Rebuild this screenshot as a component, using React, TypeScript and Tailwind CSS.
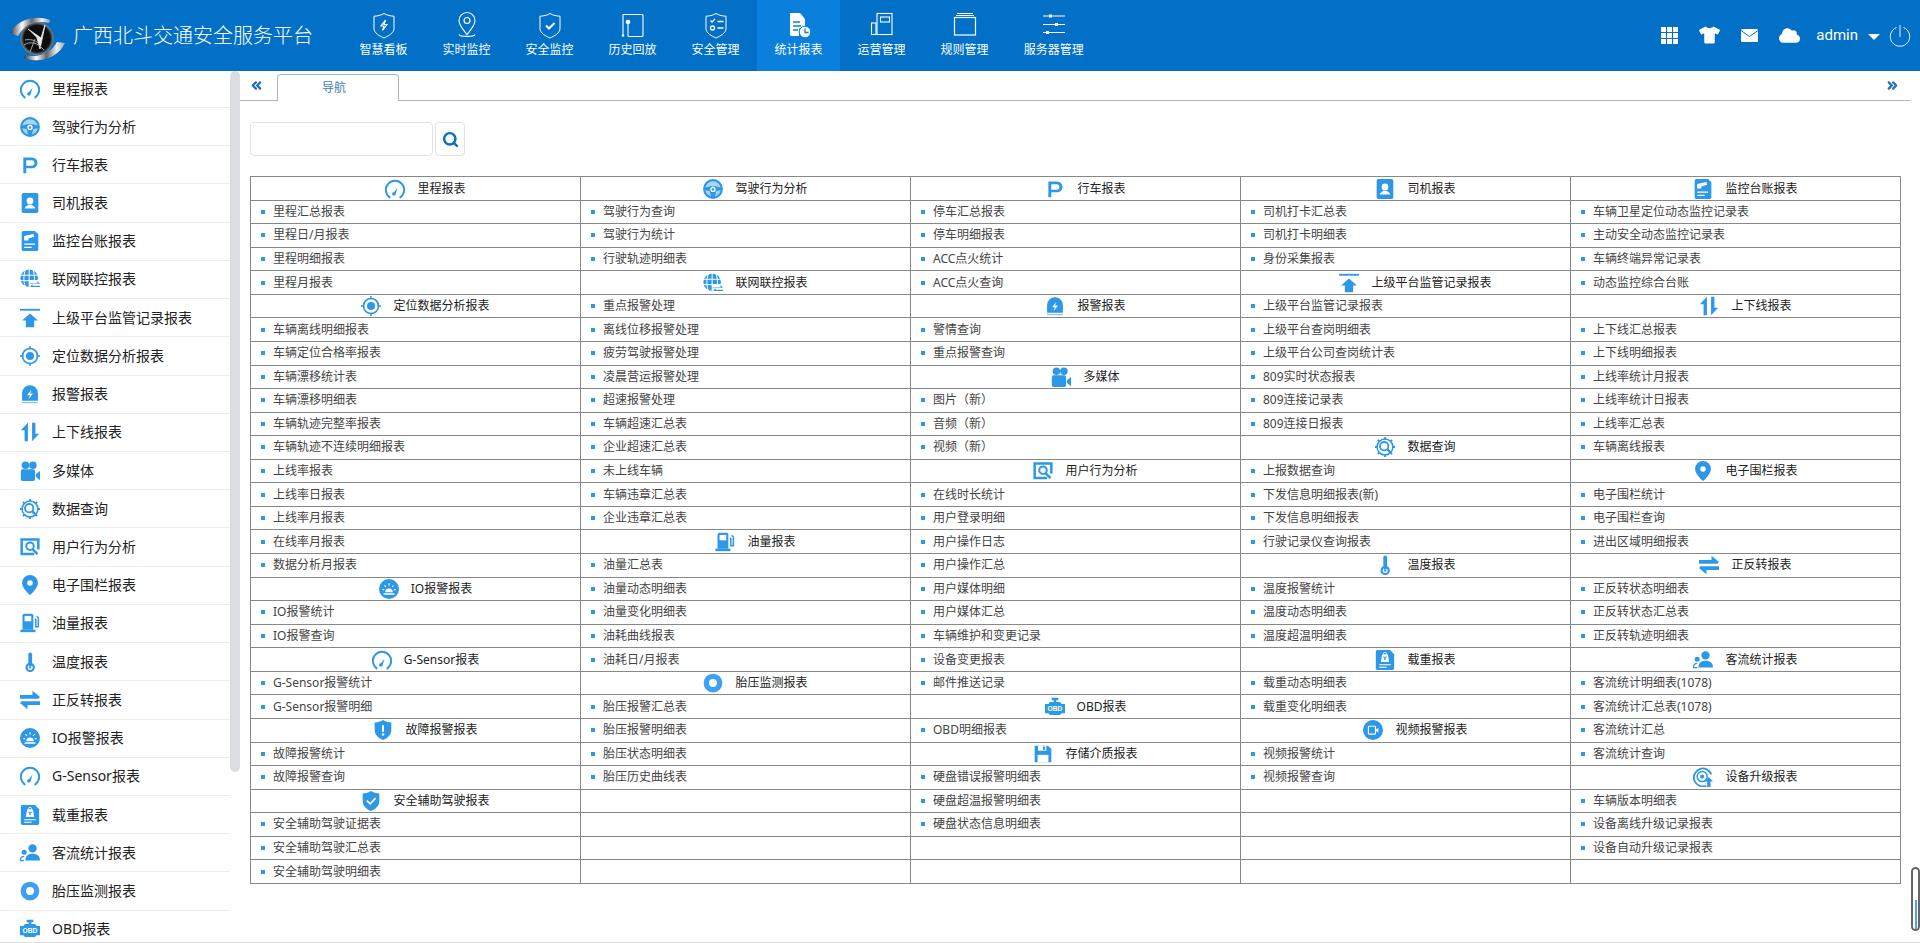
import React from 'react';
import { FaTshirt, FaCloud } from 'react-icons/fa';
import { ChevronsLeft, ChevronsRight, Search } from 'lucide-react';

type IconName =
  | 'gauge' | 'wheel' | 'park' | 'driver' | 'ledger' | 'globe' | 'upload' | 'target' | 'alarm'
  | 'updown' | 'camera' | 'dataq' | 'behavior' | 'pin' | 'fuel' | 'thermo' | 'swap' | 'ioalarm'
  | 'weight' | 'people' | 'tire' | 'obd' | 'fault' | 'safe' | 'save' | 'video' | 'upgrade';

// 报表分类图标，全部按 24x24 绘制
const ReportIcon: React.FC<{ name: IconName; className?: string }> = ({ name, className = 'w-5 h-5' }) => {
  const white = '#fff';
  const shapes: Record<IconName, React.ReactNode> = {
    gauge: (
      <>
        <path d="M5.5 22A11 11 0 1 1 18.5 22" fill="none" stroke="currentColor" strokeWidth="2.4" strokeLinecap="round" />
        <path d="M9.5 17.5L15 10.5 12.5 19z" fill="currentColor" />
        <circle cx="10.5" cy="18" r="2" fill="currentColor" />
      </>
    ),
    wheel: (
      <>
        <circle cx="12" cy="12" r="10.6" fill="#a9d5f7" stroke="currentColor" strokeWidth="2.6" />
        <path d="M2 10.500C7 8 17 8 22 10.500v3l-6 1-2 8h-4l-2-8-6-1z" fill="currentColor" />
        <circle cx="12" cy="12.500" r="3.200" fill={white} />
        <circle cx="12" cy="12.500" r="1.500" fill="currentColor" />
      </>
    ),
    park: <path fillRule="evenodd" fill="currentColor" d="M4 3h10.5a6.5 6.5 0 0 1 0 13H7.5v6H4zM7.5 6.200v6.600h6.500a3.300 3.300 0 0 0 0-6.600z" />,
    driver: (
      <>
        <rect x="2" y="0" width="20" height="24" rx="2" fill="currentColor" />
        <circle cx="12" cy="9.500" r="4" fill={white} />
        <path d="M5.500 18.500c1-3 4-3.500 4.500-4.500h4c.5 1 3.500 1.500 4.500 4.500z" fill={white} />
      </>
    ),
    ledger: (
      <>
        <path d="M2 2a2 2 0 0 1 2-2h14l4 4v18a2 2 0 0 1-2 2H4a2 2 0 0 1-2-2z" fill="currentColor" />
        <path d="M5 6l11-2.500 1 3.500-7 2v2.500H5zM5 15h13v1.500H5zM5 19h9v1.500H5z" fill={white} />
      </>
    ),
    globe: (
      <>
        <circle cx="11" cy="11" r="10.500" fill="currentColor" />
        <path d="M0 7.500h22M0 14h22" stroke={white} strokeWidth="1.200" />
        <path d="M11 0v22M6.500 1c-2.500 6-2.500 14 0 20M15.500 1c2.500 6 2.500 14 0 20" fill="none" stroke={white} strokeWidth="1.200" />
        <rect x="11" y="13.500" width="13" height="10.500" fill={white} />
        <path d="M12 17h9v-2.500l3 3.300H12zM24 20h-9v-2l-3 3.700h12z" fill="currentColor" />
      </>
    ),
    upload: (
      <>
        <rect x="0" y="1" width="24" height="2.200" fill="currentColor" />
        <path d="M12 6.500l9.500 8.500H17v8H7v-8H2.500z" fill="currentColor" />
      </>
    ),
    target: (
      <>
        <circle cx="12" cy="12" r="9" fill="none" stroke="currentColor" strokeWidth="2" />
        <circle cx="12" cy="12" r="4.800" fill="currentColor" />
        <path d="M12 0v4M12 20v4M0 12h4M20 12h4" stroke="currentColor" strokeWidth="1.800" />
      </>
    ),
    alarm: (
      <>
        <path d="M2.500 20v-9a9.500 9.500 0 0 1 19 0v9z" fill="currentColor" />
        <path d="M14 6.500l-5.500 7h3.500l-2 5 5.500-7h-3.500z" fill={white} />
        <rect x="2.500" y="21.500" width="19" height="1.600" fill="currentColor" opacity=".55" />
      </>
    ),
    updown: <path d="M1 10L9.500 1v22h-4V10zM14.500 1h4v13H23l-8.500 9z" fill="currentColor" />,
    camera: (
      <>
        <circle cx="6.500" cy="5" r="4.500" fill="currentColor" />
        <circle cx="15.500" cy="5" r="4.500" fill="currentColor" />
        <path d="M1 12a2 2 0 0 1 2-2h13a2 2 0 0 1 2 2v10a2 2 0 0 1-2 2H3a2 2 0 0 1-2-2z" fill="currentColor" />
        <path d="M19 16l5-4v11l-5-4z" fill="currentColor" />
      </>
    ),
    dataq: (
      <>
        <circle cx="12" cy="12" r="9.500" fill="none" stroke="currentColor" strokeWidth="1.800" />
        <path d="M12 0v3M12 21v3M0 12h3M21 12h3M3.500 3.500l2 2M18.500 18.500l2 2M20.500 3.500l-2 2M3.500 20.500l2-2" stroke="currentColor" strokeWidth="2.200" />
        <circle cx="11" cy="11" r="5" fill="none" stroke="currentColor" strokeWidth="2.200" />
        <path d="M14.500 14.500l4.500 4.500" stroke="currentColor" strokeWidth="3" />
      </>
    ),
    behavior: (
      <>
        <path d="M17 20.500H2V3h20v12" fill="none" stroke="currentColor" strokeWidth="3" />
        <circle cx="12" cy="11" r="4.500" fill="none" stroke="currentColor" strokeWidth="2.400" />
        <path d="M15 14.500l6 6" stroke="currentColor" strokeWidth="3" />
      </>
    ),
    pin: (
      <path fillRule="evenodd" fill="currentColor" d="M12 0a9.500 9.500 0 0 1 9.500 9.500C21.500 16 12 24 12 24S2.500 16 2.500 9.500A9.500 9.500 0 0 1 12 0zm0 6.200a3.300 3.300 0 1 0 0 6.600 3.300 3.300 0 0 0 0-6.600z" />
    ),
    fuel: (
      <>
        <path d="M3 3a2 2 0 0 1 2-2h9a2 2 0 0 1 2 2v17H3z" fill="currentColor" />
        <rect x="5.500" y="3.500" width="8" height="6.500" fill={white} />
        <rect x="0.500" y="20" width="18" height="3" fill="currentColor" />
        <path d="M18 7l1 1v8.500h3V6l-2-2" fill="none" stroke="currentColor" strokeWidth="1.800" />
      </>
    ),
    thermo: (
      <>
        <rect x="10" y="0.500" width="4.500" height="17" rx="2.200" fill="currentColor" />
        <circle cx="12.200" cy="18.500" r="4.300" fill="none" stroke="currentColor" strokeWidth="2.600" />
        <circle cx="12.200" cy="18.500" r="1.400" fill="currentColor" />
      </>
    ),
    swap: <path d="M0 6h15V1l9 7.500-2 2H0zM24 13.500H2L0 15.500 9 23v-5h15z" fill="currentColor" />,
    ioalarm: (
      <>
        <circle cx="12" cy="12" r="12" fill="currentColor" />
        <path d="M7.500 16a4.500 4.500 0 0 1 9 0zM5.500 17h13v1.800h-13z" fill={white} />
        <path d="M12 5v3M6.500 7.500l1.800 2M17.500 7.500l-1.800 2M4 12.500l2.300.8M20 12.500l-2.300.8" stroke={white} strokeWidth="1.300" />
      </>
    ),
    weight: (
      <>
        <path d="M1 2a2 2 0 0 1 2-2h15l5 5v17a2 2 0 0 1-2 2H3a2 2 0 0 1-2-2z" fill="currentColor" />
        <path d="M8.500 5.500h7l1.500 9H7z" fill={white} />
        <circle cx="12" cy="4.500" r="1.800" fill="none" stroke={white} />
        <path d="M11.200 8h1.600v4h-1.600zM9.800 8h4.400v1H9.800z" fill="currentColor" />
        <path d="M5 17h14v1.300H5zM5 20h9v1.300H5z" fill={white} />
      </>
    ),
    people: (
      <>
        <circle cx="15" cy="6.500" r="5" fill="currentColor" />
        <path d="M6.500 21c0-6 4-8 8.500-8s9 2 9 8z" fill="currentColor" />
        <circle cx="5" cy="11" r="3" fill="currentColor" />
        <path d="M5 16c-3 0-4.500 2-4.500 5H5" fill="none" stroke="currentColor" strokeWidth="1.500" />
      </>
    ),
    tire: <circle cx="12" cy="12" r="8" fill="none" stroke="#3f9ff5" strokeWidth="6.500" />,
    obd: (
      <>
        <path d="M8 1h8v3h-2.500v2H18l2 2.500h4v11h-4l-2 2H6l-2-2H0v-11h4L6 6h4.500V4H8z" fill="currentColor" />
        <text x="12" y="17" textAnchor="middle" fontSize="8" fontWeight="700" fill={white} fontFamily="Liberation Sans, sans-serif">OBD</text>
      </>
    ),
    fault: (
      <>
        <path d="M12 0c3 2 6 3 10 3v9c0 6-5 10-10 12C7 22 2 18 2 12V3c4 0 7-1 10-3z" fill="currentColor" />
        <rect x="10.800" y="6" width="2.400" height="8.500" rx="1" fill={white} />
        <circle cx="12" cy="17.500" r="1.500" fill={white} />
      </>
    ),
    safe: (
      <>
        <path d="M12 0c3 2 6 3 10 3v9c0 6-5 10-10 12C7 22 2 18 2 12V3c4 0 7-1 10-3z" fill="currentColor" />
        <path d="M7 11.500l4 4 6.500-7" fill="none" stroke={white} strokeWidth="2" />
      </>
    ),
    save: (
      <>
        <path d="M2 2h16l4 4v16H2z" fill="currentColor" />
        <rect x="6" y="2" width="10" height="6" fill={white} />
        <rect x="12" y="3" width="2.500" height="4" fill="currentColor" />
        <rect x="5.500" y="13" width="13" height="9" fill={white} />
      </>
    ),
    video: (
      <>
        <circle cx="12" cy="12" r="12" fill="currentColor" />
        <rect x="6.500" y="7.500" width="8.500" height="9.500" rx="1" fill="none" stroke={white} strokeWidth="1.400" />
        <path d="M15.500 11.500l3-2v5.500l-3-2z" fill={white} />
      </>
    ),
    upgrade: (
      <>
        <path d="M16 22.500A10.800 10.800 0 1 1 22 9" fill="none" stroke="currentColor" strokeWidth="2.200" />
        <circle cx="11" cy="11.500" r="6" fill="none" stroke="currentColor" strokeWidth="1.800" />
        <circle cx="11" cy="11.500" r="2.500" fill="currentColor" />
        <path d="M19 12l5 5.500h-3V24h-4v-6.500h-3z" fill="currentColor" />
      </>
    ),
  };
  return (
    <svg viewBox="0 0 24 24" className={`${className} shrink-0 text-[#2d97e8]`}>
      {shapes[name]}
    </svg>
  );
};

const shield = 'M14 2.500c3.500 2 6.500 2.500 10 2.700v12.300c0 4.500-5.500 7.500-10 9.500-4.500-2-10-5-10-9.500V5.200c3.500-.2 6.500-.7 10-2.700z';

// 顶部导航的线框图标
const navIcons: React.ReactNode[] = [
  <>
    <path d={shield} fill="none" stroke="#fff" strokeWidth="1" />
    <path d="M15.500 9l-4.500 6h3l-1.500 4.500 4.500-6h-3z" fill="none" stroke="#fff" strokeWidth="1.200" />
  </>,
  <>
    <path d="M14 1.500a8 8 0 0 1 8 8c0 5-5 10-8 14-3-4-8-9-8-14a8 8 0 0 1 8-8z" fill="none" stroke="#fff" strokeWidth="1.100" />
    <circle cx="14" cy="9.500" r="3" fill="none" stroke="#fff" strokeWidth="1.200" />
    <path d="M6 23.500c1 2.500 15 2.500 16 0" fill="none" stroke="#fff" strokeWidth="1.100" />
  </>,
  <>
    <path d={shield} fill="none" stroke="#fff" strokeWidth="1" />
    <path d="M10 14.500l3 3 5.500-5.500" fill="none" stroke="#fff" strokeWidth="2" />
  </>,
  <>
    <path d="M4 24V6a2 2 0 0 1 0-1V3.500h19a1 1 0 0 1 1 1v20a1 1 0 0 1-1 1H10a1 1 0 0 1-1-1V11" fill="none" stroke="#fff" strokeWidth="1.100" />
    <circle cx="9" cy="11" r="2.300" fill="#fff" />
    <circle cx="4" cy="24.500" r="1.300" fill="#fff" />
  </>,
  <>
    <path d={shield} fill="none" stroke="#fff" strokeWidth="1" />
    <path d="M8.500 9.500l1.500 1.500 3-3M15.500 10.500h6M15.500 17h6" fill="none" stroke="#fff" strokeWidth="1.400" />
    <circle cx="10.500" cy="17" r="2" fill="none" stroke="#fff" strokeWidth="1.400" />
  </>,
  <>
    <path d="M5 2h10l5 6v9.500H5z" fill="#fff" />
    <path d="M5 17h9v8H6.500A1.500 1.500 0 0 1 5 23.500z" fill="#fff" />
    <path d="M8 11h7M8 15h8M8 19h5" stroke="#0a80dc" strokeWidth="1.300" />
    <circle cx="20" cy="21" r="5.800" fill="#fff" stroke="#0a80dc" strokeWidth="1" />
    <path d="M20 17.500v4h3.500" fill="none" stroke="#0a80dc" strokeWidth="1.300" />
  </>,
  <>
    <rect x="9" y="2.500" width="15" height="21" fill="none" stroke="#fff" strokeWidth="1.100" />
    <rect x="12.500" y="6" width="9" height="5" fill="none" stroke="#fff" strokeWidth="1.100" />
    <rect x="3.500" y="12" width="4.500" height="11.500" fill="none" stroke="#fff" strokeWidth="1.100" />
  </>,
  <>
    <rect x="3.500" y="6.500" width="21" height="17.500" fill="none" stroke="#fff" strokeWidth="1.200" />
    <path d="M5 4.500h18M6 2.500h16" stroke="#fff" strokeWidth="1" />
  </>,
  <>
    <path d="M3 5h22M3 13.500h22M3 21.500h22" stroke="#fff" strokeWidth="1.100" />
    <rect x="9" y="3.500" width="3" height="3" fill="#fff" />
    <rect x="15" y="12" width="3" height="3" fill="#fff" />
    <rect x="6" y="20" width="3" height="3" fill="#fff" />
  </>,
];

const navItems = ['智慧看板', '实时监控', '安全监控', '历史回放', '安全管理', '统计报表', '运营管理', '规则管理', '服务器管理'];

const sideItems: [IconName, string][] = [
  ['gauge', '里程报表'], ['wheel', '驾驶行为分析'], ['park', '行车报表'], ['driver', '司机报表'],
  ['ledger', '监控台账报表'], ['globe', '联网联控报表'], ['upload', '上级平台监管记录报表'], ['target', '定位数据分析报表'],
  ['alarm', '报警报表'], ['updown', '上下线报表'], ['camera', '多媒体'], ['dataq', '数据查询'],
  ['behavior', '用户行为分析'], ['pin', '电子围栏报表'], ['fuel', '油量报表'], ['thermo', '温度报表'],
  ['swap', '正反转报表'], ['ioalarm', 'IO报警报表'], ['gauge', 'G-Sensor报表'], ['weight', '载重报表'],
  ['people', '客流统计报表'], ['tire', '胎压监测报表'], ['obd', 'OBD报表'],
];

type Cell = string | [IconName, string];

const columns: Cell[][] = [
  [
    ['gauge', '里程报表'], '里程汇总报表', '里程日/月报表', '里程明细报表', '里程月报表',
    ['target', '定位数据分析报表'], '车辆离线明细报表', '车辆定位合格率报表', '车辆漂移统计表', '车辆漂移明细表', '车辆轨迹完整率报表', '车辆轨迹不连续明细报表',
    '上线率报表', '上线率日报表', '上线率月报表', '在线率月报表', '数据分析月报表',
    ['ioalarm', 'IO报警报表'], 'IO报警统计', 'IO报警查询',
    ['gauge', 'G-Sensor报表'], 'G-Sensor报警统计', 'G-Sensor报警明细',
    ['fault', '故障报警报表'], '故障报警统计', '故障报警查询',
    ['safe', '安全辅助驾驶报表'], '安全辅助驾驶证据表', '安全辅助驾驶汇总表', '安全辅助驾驶明细表',
  ],
  [
    ['wheel', '驾驶行为分析'], '驾驶行为查询', '驾驶行为统计', '行驶轨迹明细表',
    ['globe', '联网联控报表'], '重点报警处理', '离线位移报警处理', '疲劳驾驶报警处理', '凌晨营运报警处理', '超速报警处理', '车辆超速汇总表', '企业超速汇总表', '未上线车辆', '车辆违章汇总表', '企业违章汇总表',
    ['fuel', '油量报表'], '油量汇总表', '油量动态明细表', '油量变化明细表', '油耗曲线报表', '油耗日/月报表',
    ['tire', '胎压监测报表'], '胎压报警汇总表', '胎压报警明细表', '胎压状态明细表', '胎压历史曲线表',
    '', '', '', '',
  ],
  [
    ['park', '行车报表'], '停车汇总报表', '停车明细报表', 'ACC点火统计', 'ACC点火查询',
    ['alarm', '报警报表'], '警情查询', '重点报警查询',
    ['camera', '多媒体'], '图片（新）', '音频（新）', '视频（新）',
    ['behavior', '用户行为分析'], '在线时长统计', '用户登录明细', '用户操作日志', '用户操作汇总', '用户媒体明细', '用户媒体汇总', '车辆维护和变更记录', '设备变更报表', '邮件推送记录',
    ['obd', 'OBD报表'], 'OBD明细报表',
    ['save', '存储介质报表'], '硬盘错误报警明细表', '硬盘超温报警明细表', '硬盘状态信息明细表',
    '', '',
  ],
  [
    ['driver', '司机报表'], '司机打卡汇总表', '司机打卡明细表', '身份采集报表',
    ['upload', '上级平台监管记录报表'], '上级平台监管记录报表', '上级平台查岗明细表', '上级平台公司查岗统计表', '809实时状态报表', '809连接记录表', '809连接日报表',
    ['dataq', '数据查询'], '上报数据查询', '下发信息明细报表(新)', '下发信息明细报表', '行驶记录仪查询报表',
    ['thermo', '温度报表'], '温度报警统计', '温度动态明细表', '温度超温明细表',
    ['weight', '载重报表'], '载重动态明细表', '载重变化明细表',
    ['video', '视频报警报表'], '视频报警统计', '视频报警查询',
    '', '', '', '',
  ],
  [
    ['ledger', '监控台账报表'], '车辆卫星定位动态监控记录表', '主动安全动态监控记录表', '车辆终端异常记录表', '动态监控综合台账',
    ['updown', '上下线报表'], '上下线汇总报表', '上下线明细报表', '上线率统计月报表', '上线率统计日报表', '上线率汇总表', '车辆离线报表',
    ['pin', '电子围栏报表'], '电子围栏统计', '电子围栏查询', '进出区域明细报表',
    ['swap', '正反转报表'], '正反转状态明细表', '正反转状态汇总表', '正反转轨迹明细表',
    ['people', '客流统计报表'], '客流统计明细表(1078)', '客流统计汇总表(1078)', '客流统计汇总', '客流统计查询',
    ['upgrade', '设备升级报表'], '车辆版本明细表', '设备离线升级记录报表', '设备自动升级记录报表',
    '',
  ],
];

const Logo = () => (
  <svg viewBox="0 0 65 55" className="w-[65px] h-[55px] shrink-0">
    <defs>
      <linearGradient id="metal" x1="0" y1="0" x2="1" y2="0">
        <stop offset="0" stopColor="#34383d" />
        <stop offset=".3" stopColor="#fafafa" />
        <stop offset=".55" stopColor="#62676c" />
        <stop offset=".8" stopColor="#f0f0f0" />
        <stop offset="1" stopColor="#9ea2a6" />
      </linearGradient>
      <radialGradient id="ball" cx=".5" cy=".5" r=".55">
        <stop offset=".72" stopColor="#0d0d0d" />
        <stop offset=".92" stopColor="#8f8f8f" />
        <stop offset="1" stopColor="#d0d0d0" />
      </radialGradient>
    </defs>
    <path d="M5 21C12 8 30 2 45 8l-1 3C30 8 20 12 13 24z" fill="url(#metal)" />
    <path d="M60 31C53 46 35 52 19 46l1-3c14 3 25-1 32-13z" fill="url(#metal)" />
    <circle cx="32" cy="26.500" r="16.500" fill="url(#ball)" />
    <path d="M23 17l13 9 4-13-5 24-3-11" fill="#e8e8e8" stroke="#f2f2f2" strokeWidth=".8" />
    <path d="M19 33c6-4 13-3 20 5M25 40l5-13M20 28c5-1 10 0 13 3" fill="none" stroke="#a8a8a8" strokeWidth="1" />
  </svg>
);

const App: React.FC = () => {
  return (
    <div className="relative h-screen w-full flex flex-col overflow-hidden bg-white font-['Noto_Sans','Noto_Sans_CJK_SC',sans-serif]">
      {/* Header */}
      <header className="h-[71px] shrink-0 flex bg-[#0170c6] text-white">
        <div className="pl-[5px] pt-[12px]">
          <Logo />
        </div>
        <div className="ml-[3px] pt-[22px] w-[240px] text-[20px] leading-[28px] font-light whitespace-nowrap">广西北斗交通安全服务平台</div>
        <nav className="ml-[29px] flex h-full">
          {navItems.map((label, i) => (
            <div key={label} className={`flex flex-col items-center px-[17.5px] pt-[11px] ${i === 5 ? 'bg-[#0a80dc]' : ''}`}>
              <svg viewBox="0 0 28 28" className="w-7 h-7">{navIcons[i]}</svg>
              <span className="mt-[3px] text-xs leading-4 whitespace-nowrap">{label}</span>
            </div>
          ))}
        </nav>
        <div className="ml-auto flex items-center pr-[9px] pb-[1px]">
          <svg viewBox="0 0 17 17" className="w-[17px] h-[17px]">
            <path d="M0 0h5v5H0zM6 0h5v5H6zM12 0h5v5h-5zM0 6h5v5H0zM6 6h5v5H6zM12 6h5v5h-5zM0 12h5v5H0zM6 12h5v5H6zM12 12h5v5h-5z" fill="#fff" />
          </svg>
          <FaTshirt className="ml-[21px] text-[20px] w-[21px]" />
          <svg viewBox="0 0 17 13" className="ml-[21px] w-[17px] h-[13px]">
            <rect width="17" height="13" rx="1" fill="#fff" />
            <path d="M0 1.500l8.500 6 8.500-6" fill="none" stroke="#0170c6" strokeWidth="1" />
          </svg>
          <FaCloud className="ml-[21px] text-[21px]" />
          <span className="ml-[16px] text-[15px] leading-5 font-['Roboto',sans-serif]">admin</span>
          <span className="ml-[10px] mt-[3px] w-0 h-0 border-x-[6px] border-x-transparent border-t-[6px] border-t-white" />
          <svg viewBox="0 0 22 22" className="ml-[9px] w-[22px] h-[22px] mt-[1px]">
            <path d="M7.500 2.500a9.700 9.700 0 1 0 7 0" fill="none" stroke="#fff" strokeWidth=".9" />
            <path d="M11 0v12" stroke="#fff" strokeWidth=".9" />
          </svg>
        </div>
      </header>

      <div className="flex-1 min-h-0 flex border-b border-[#dcdcdc]">
        {/* Sidebar */}
        <aside className="w-[240px] shrink-0 flex overflow-hidden">
          <ul className="w-[230px] shrink-0">
            {sideItems.map(([icon, label], i) => (
              <li
                key={label + i}
                className={`flex items-center pl-[20px] gap-3 border-b border-[#ececec] text-sm text-[#222] ${i === 0 ? 'h-[37px]' : 'h-[38.22px]'}`}
              >
                <ReportIcon name={icon} />
                <span>{label}</span>
              </li>
            ))}
          </ul>
          <div className="w-[10px] shrink-0">
            <div className="h-[701px] rounded-[5px] bg-[#dcdde0]" />
          </div>
        </aside>

        {/* Content */}
        <main className="flex-1 min-w-0 flex flex-col">
          <div className="h-[30px] w-[1671px] shrink-0 flex items-start justify-between pl-[9px] pr-[11px] border-b border-[#b4b4b4]">
            <div className="flex">
              <ChevronsLeft size={15} strokeWidth={3.5} className="mt-[7px] text-[#1b6fc2]" />
              <div className="ml-[13px] mt-[3px] h-[27px] w-[122px] flex items-center justify-center pr-2 rounded-t border border-b-0 border-[#b4b4b4] bg-white text-xs text-[#3c7fb8]">导航</div>
            </div>
            <ChevronsRight size={15} strokeWidth={3.5} className="mt-[7px] text-[#1b6fc2]" />
          </div>

          <div className="mt-[21px] ml-[10px] flex h-[34px] shrink-0 gap-[2px]">
            <div className="w-[183px] rounded-sm border border-[#e2e2e2] bg-white" />
            <div className="w-[30px] flex items-center justify-center rounded border border-[#e2e2e2]">
              <Search size={17} strokeWidth={3.5} className="text-[#0b6ebf]" />
            </div>
          </div>

          <table className="mt-[20px] ml-[10px] w-[1651px] shrink-0 table-fixed border-collapse border border-[#888] text-xs text-[#444]">
            <tbody>
              {columns[0].map((_, r) => (
                <tr key={r} className="h-[23.57px]">
                  {columns.map((col, c) => {
                    const cell = col[r];
                    if (Array.isArray(cell)) {
                      // 标题文字按单元格偏右居中，图标紧贴文字左侧，不占宽度
                      return (
                        <td key={c} className={`border border-[#888] p-0 ${r === 0 ? 'pt-[2px]' : ''}`}>
                          <div className="flex items-center justify-center pl-[52px] text-[#222] leading-4">
                            <ReportIcon name={cell[0]} className="w-5 h-5 -ml-[32px] mr-3" />
                            <span>{cell[1]}</span>
                          </div>
                        </td>
                      );
                    }
                    return (
                      <td key={c} className="border border-[#888] p-0 pl-[10px]">
                        {cell && (
                          <div className="flex items-center gap-2 leading-4">
                            <span className="h-1 w-1 shrink-0 bg-[#2d97e8]" />
                            <span>{cell}</span>
                          </div>
                        )}
                      </td>
                    );
                  })}
                </tr>
              ))}
            </tbody>
          </table>
        </main>
      </div>

      {/* 右下角悬浮滑块 */}
      <div className="absolute right-0 top-[867px] h-[64px] w-[9px] rounded-full border-2 border-[#666] bg-white flex justify-center items-end overflow-hidden">
        <div className="h-[29px] w-[2px] bg-[#4da3f5]" />
      </div>
    </div>
  );
};

export default App;
